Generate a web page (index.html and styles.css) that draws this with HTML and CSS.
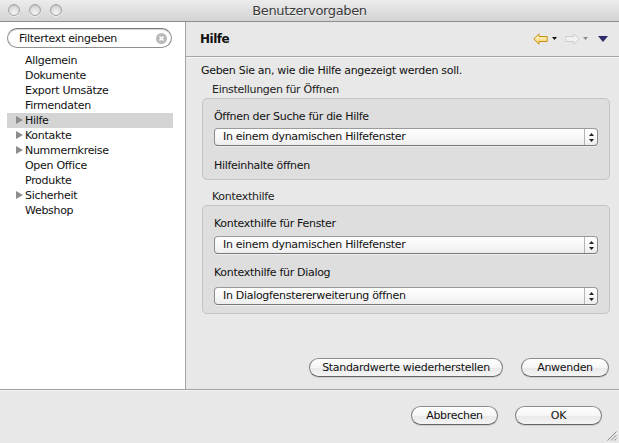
FILE: index.html
```html
<!DOCTYPE html>
<html lang="de">
<head>
<meta charset="utf-8">
<title>Benutzervorgaben</title>
<link rel="stylesheet" href="styles.css">
</head>
<body>
<div class="window">
  <div class="titlebar">
    <div class="lights"><span class="light"></span><span class="light"></span><span class="light"></span></div>
    <div class="title">Benutzervorgaben</div>
    <div></div>
  </div>
  <div class="main">
    <aside class="sidebar">
      <div class="search">
        <span class="search-text">Filtertext eingeben</span>
        <svg class="clear" width="11" height="11" viewBox="0 0 11 11"><circle cx="5.5" cy="5.5" r="5.5" fill="#b9b9b9"/><path d="M3.5 3.5 L7.5 7.5 M7.5 3.5 L3.5 7.5" stroke="#fff" stroke-width="1.6"/></svg>
      </div>
      <ul class="tree">
        <li class="item">Allgemein</li>
        <li class="item">Dokumente</li>
        <li class="item">Export Umsätze</li>
        <li class="item">Firmendaten</li>
        <li class="item parent selected"><span class="twisty"></span>Hilfe</li>
        <li class="item parent"><span class="twisty"></span>Kontakte</li>
        <li class="item parent"><span class="twisty"></span>Nummernkreise</li>
        <li class="item">Open Office</li>
        <li class="item">Produkte</li>
        <li class="item parent"><span class="twisty"></span>Sicherheit</li>
        <li class="item">Webshop</li>
      </ul>
    </aside>
    <section class="content">
      <header class="page-header">
        <h1 class="page-title">Hilfe</h1>
        <div class="nav">
          <svg class="nav-back" width="15" height="12" viewBox="0 0 15 12">
            <defs><linearGradient id="gy" x1="0" y1="0" x2="0" y2="1"><stop offset="0" stop-color="#fffbe0"/><stop offset="1" stop-color="#f6cf5a"/></linearGradient></defs>
            <path d="M0.8 6 L6 0.8 L6 3.5 L14.2 3.5 L14.2 8.5 L6 8.5 L6 11.2 Z" fill="url(#gy)" stroke="#c88e14" stroke-width="1" stroke-linejoin="round"/>
          </svg>
          <svg class="nav-drop" width="5" height="3" viewBox="0 0 5 3"><path d="M0 0 H5 L2.5 3 Z" fill="#111"/></svg>
          <svg class="nav-fwd" width="15" height="12" viewBox="0 0 15 12">
            <path d="M14.2 6 L9 0.8 L9 3.5 L0.8 3.5 L0.8 8.5 L9 8.5 L9 11.2 Z" fill="#f2f2f2" stroke="#cdcdcd" stroke-width="1" stroke-linejoin="round"/>
          </svg>
          <svg class="nav-drop" width="5" height="3" viewBox="0 0 5 3"><path d="M0 0 H5 L2.5 3 Z" fill="#8a8a8a"/></svg>
          <svg class="nav-menu" width="10" height="6" viewBox="0 0 10 6"><path d="M0 0 H10 L5 6 Z" fill="#2c2c6a"/></svg>
        </div>
      </header>
      <div class="page-body">
        <p class="desc">Geben Sie an, wie die Hilfe angezeigt werden soll.</p>

        <div class="group-label">Einstellungen für Öffnen</div>
        <div class="group group-open">
          <div class="field-label">Öffnen der Suche für die Hilfe</div>
          <div class="select"><span class="select-text">In einem dynamischen Hilfefenster</span><span class="stepper"><svg width="5" height="9" viewBox="0 0 5 9"><path d="M2.5 0 L5 3 H0 Z M0 6 H5 L2.5 9 Z" fill="#222"/></svg></span></div>
          <div class="field-label field-gap">Hilfeinhalte öffnen</div>
        </div>

        <div class="group-label group-label-2">Kontexthilfe</div>
        <div class="group group-context">
          <div class="field-label">Kontexthilfe für Fenster</div>
          <div class="select"><span class="select-text">In einem dynamischen Hilfefenster</span><span class="stepper"><svg width="5" height="9" viewBox="0 0 5 9"><path d="M2.5 0 L5 3 H0 Z M0 6 H5 L2.5 9 Z" fill="#222"/></svg></span></div>
          <div class="field-label field-gap2">Kontexthilfe für Dialog</div>
          <div class="select"><span class="select-text">In Dialogfenstererweiterung öffnen</span><span class="stepper"><svg width="5" height="9" viewBox="0 0 5 9"><path d="M2.5 0 L5 3 H0 Z M0 6 H5 L2.5 9 Z" fill="#222"/></svg></span></div>
        </div>
      </div>
      <div class="page-buttons">
        <button class="btn btn-defaults">Standardwerte wiederherstellen</button>
        <button class="btn btn-apply">Anwenden</button>
      </div>
    </section>
  </div>
  <footer class="footer">
    <button class="btn btn-dialog">Abbrechen</button>
    <button class="btn btn-dialog">OK</button>
    <svg class="grip" width="11" height="11" viewBox="0 0 11 11"><path d="M10.5 1.5 L1.5 10.5 M10.5 5 L5 10.5 M10.5 8.5 L8.5 10.5" stroke="#8a8a8a" stroke-width="1"/></svg>
  </footer>
</div>
</body>
</html>
```

FILE: styles.css
```css
* { box-sizing: border-box; }
html, body { margin: 0; padding: 0; }
body {
  width: 619px;
  height: 443px;
  overflow: hidden;
  font-family: "DejaVu Sans", Verdana, sans-serif;
  font-size: 11px;
  letter-spacing: -0.3px;
  color: #111;
  background: #e8e8e8;
}
.window {
  position: relative;
  width: 619px;
  height: 443px;
  display: flex;
  flex-direction: column;
}

/* title bar */
.titlebar {
  height: 22px;
  flex: none;
  display: grid;
  grid-template-columns: 1fr auto 1fr;
  align-items: center;
  background: linear-gradient(#ececec, #d3d3d3);
  border-bottom: 1px solid #8e8e8e;
}
.lights {
  display: flex;
  gap: 9px;
  padding-left: 8px;
  padding-bottom: 1px;
}
.light {
  width: 12px;
  height: 12px;
  border-radius: 50%;
  border: 1px solid #a6a6a6;
  background: radial-gradient(circle at 50% 80%, #f4f4f4 0%, #dcdcdc 60%, #cfcfcf 100%);
  box-shadow: inset 0 1px 1px rgba(0,0,0,0.12), 0 1px 0 rgba(255,255,255,0.6);
}
.title {
  font-size: 13px;
  letter-spacing: -0.35px;
  color: #3a3a3a;
  line-height: 21px;
  text-shadow: 0 1px 0 rgba(255,255,255,0.6);
}

/* main */
.main {
  flex: none;
  height: 368px;
  display: flex;
  border-bottom: 1px solid #a2a2a2;
}
.sidebar {
  width: 186px;
  flex: none;
  background: #fff;
  border-right: 1px solid #a3a3a3;
  padding-top: 6px;
}
.search {
  margin: 0 13px 0 7px;
  height: 20px;
  border-radius: 10px;
  border: 1px solid #8f8f8f;
  border-top-color: #777;
  box-shadow: inset 0 1px 1px rgba(0,0,0,0.18);
  display: flex;
  align-items: center;
  justify-content: space-between;
  padding: 0 4px 0 11px;
  background: #fff;
}
.search-text { color: #111; }
.clear { display: block; }

.tree {
  list-style: none;
  margin: 5px 0 0;
  padding: 0;
}
.item {
  height: 15px;
  line-height: 15px;
  margin: 0 12px 0 7px;
  padding-left: 18px;
  display: flex;
  align-items: center;
  white-space: nowrap;
}
.item.parent { padding-left: 9px; }
.item.selected { background: #d4d4d4; }
.twisty {
  width: 9px;
  height: 9px;
  flex: none;
  position: relative;
}
.twisty::before {
  content: "";
  position: absolute;
  left: 0;
  top: 0;
  border-left: 7px solid #8d8d8d;
  border-top: 4.5px solid transparent;
  border-bottom: 4.5px solid transparent;
}

/* content */
.content {
  flex: 1;
  display: flex;
  flex-direction: column;
  background: #e8e8e8;
}
.page-header {
  height: 35px;
  flex: none;
  display: flex;
  align-items: center;
  justify-content: space-between;
  padding: 0 11px 1px 14px;
  border-bottom: 1px solid #a5a5a5;
  box-shadow: 0 1px 0 #f6f6f6;
}
.page-title {
  margin: 0;
  font-size: 12px;
  font-weight: bold;
  letter-spacing: -0.5px;
  color: #111;
}
.nav {
  display: flex;
  align-items: center;
}
.nav svg { display: block; }
.nav-back { margin-right: 4px; }
.nav-drop { margin-right: 8px; }
.nav-fwd { margin-right: 3px; }
.nav-drop + .nav-menu { margin-left: 2px; }
.nav-menu { margin-top: 1px; }

.page-body {
  flex: 1;
  padding: 6px 9px 0 15px;
}
.desc {
  margin: 0;
  line-height: 15px;
}
.group-label {
  margin: 4px 0 0 11px;
  line-height: 15px;
  color: #222;
}
.group-label-2 { margin-top: 9px; }
.group {
  margin: 1px 0 0 1px;
  background: #dedede;
  border: 1px solid #c3c3c3;
  border-radius: 5px;
  padding: 10px 11px 6px;
}
.group-context { padding-bottom: 8px; }
.field-label {
  line-height: 15px;
}
.field-gap { margin-top: 12px; }
.field-gap2 { margin-top: 11px; }
.select {
  margin-top: 4px;
  height: 18px;
  border: 1px solid #8c8c8c;
  border-top-color: #9a9a9a;
  border-bottom-color: #777;
  border-radius: 4px;
  background: linear-gradient(#ffffff, #f7f7f7 55%, #ededed);
  display: flex;
  align-items: center;
  justify-content: space-between;
  padding-left: 8px;
  box-shadow: 0 1px 0 rgba(255,255,255,0.5);
}
.group-context .field-label + .select { margin-top: 5px; }
.group-context .field-gap2 + .select { margin-top: 7px; }
.select-text { line-height: 16px; }
.stepper {
  width: 13px;
  height: 16px;
  border-left: 1px solid #b4b4b4;
  display: flex;
  align-items: center;
  justify-content: center;
}
.stepper svg { display: block; }

.page-buttons {
  flex: none;
  display: flex;
  justify-content: flex-end;
  gap: 18px;
  padding: 0 10px 12px 0;
}
.btn {
  font-family: inherit;
  font-size: 11px;
  letter-spacing: -0.3px;
  color: #111;
  height: 19px;
  padding: 0;
  border: 1px solid #7d7d7d;
  border-top-color: #8d8d8d;
  border-bottom-color: #666;
  border-radius: 10px;
  background: linear-gradient(#ffffff, #f6f6f6 50%, #e9e9e9 51%, #f4f4f4);
  box-shadow: 0 1px 1px rgba(0,0,0,0.12);
  line-height: 17px;
}
.btn-defaults { width: 194px; }
.btn-apply { width: 88px; }

.footer {
  flex: 1;
  display: flex;
  justify-content: flex-end;
  align-items: flex-start;
  gap: 17px;
  padding: 16px 17px 0 0;
  background: #e8e8e8;
  box-shadow: inset 0 1px 0 #f4f4f4;
}
.btn-dialog { width: 87px; }
.grip {
  position: absolute;
  right: 2px;
  bottom: 2px;
}
```
